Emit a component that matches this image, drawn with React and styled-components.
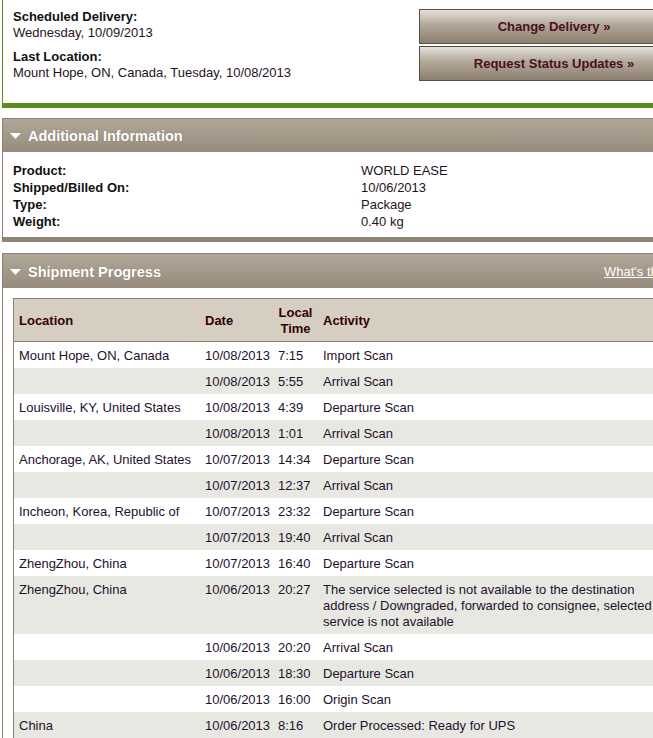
import React from 'react';
import styled, { createGlobalStyle } from 'styled-components';

const GlobalStyle = createGlobalStyle`
html, body {
  margin: 0;
  padding: 0;
  overflow: hidden;
  background: #fff;
}
body {
  font-family: "Liberation Sans", Arial, sans-serif;
  font-size: 13px;
  color: #1f1224;
}
`;

const Page = styled.div`
width: 760px;
margin-left: 2px;
`;

const TopPanel = styled.div`
box-sizing: border-box;
height: 108px;
display: flex;
border-left: 1px solid #5b8e1c;
border-bottom: 5px solid #5b8e1c;
padding: 9px 0 0 10px;
`;

const Summary = styled.div`
width: 406px;
display: flex;
flex-direction: column;
gap: 8px;
`;

const Field = styled.div`
line-height: 16px;
`;

const Label = styled.div`
font-weight: bold;
color: #111;
`;

const Buttons = styled.div`
width: 270px;
display: flex;
flex-direction: column;
gap: 2px;
`;

const ActionButton = styled.button`
box-sizing: border-box;
height: 35px;
width: 100%;
border: 1px solid #5b4e42;
background: linear-gradient(#e3e0d9, #b2a899 45%, #8b7f6f);
color: #4a1022;
font-family: "Liberation Sans", Arial, sans-serif;
font-size: 13px;
font-weight: bold;
padding: 0;
cursor: pointer;
`;

const SectionHeader = styled.div`
box-sizing: border-box;
height: ${p => p.$h}px;
margin-top: ${p => p.$top}px;
display: flex;
align-items: center;
padding: 1px 0 0 7px;
border-top: 1px solid #8a7f70;
border-left: 1px solid #8a7f70;
background: linear-gradient(#b1a798, #978c7c);
color: #fff;
`;

const Caret = styled.svg`
width: 11px;
height: 6px;
margin-right: 7px;
flex: none;
`;

const Title = styled.div`
flex: 0 0 576px;
font-size: 14.5px;
font-weight: bold;
text-shadow: 0 0 1px rgba(80, 70, 60, 0.5);
`;

const HelpLink = styled.a`
color: #fff;
text-decoration: underline;
font-size: 13px;
white-space: nowrap;
`;

const InfoBody = styled.div`
border-left: 1px solid #8a7f70;
border-bottom: 5px solid #8f8575;
padding: 10px 10px 7px;
`;

const InfoRow = styled.div`
display: grid;
grid-template-columns: 348px 1fr;
line-height: 17px;
`;

const InfoLabel = styled.div`
font-weight: bold;
color: #111;
`;

const ProgressBody = styled.div`
border-left: 1px solid #8a7f70;
padding: 10px 0 0 10px;
`;

const Table = styled.table`
width: 650px;
table-layout: fixed;
border-collapse: separate;
border-spacing: 0;
border-left: 1px solid #8a7f70;
`;

const Th = styled.th`
background: #d6cec0;
border-top: 1px solid #8a7f70;
border-bottom: 1px solid #8a7f70;
padding: 6px 5px 4px;
line-height: 16px;
height: 32px;
color: #330008;
font-weight: bold;
text-align: ${p => (p.$center ? 'center' : 'left')};
vertical-align: middle;
`;

const Row = styled.tr`
background: ${p => (p.$alt ? '#e8e8e3' : '#fff')};
`;

const Td = styled.td`
padding: 6px 5px 4px;
line-height: 16px;
vertical-align: top;
color: #24102c;
`;

const rows = [
  ['Mount Hope, ON, Canada', '10/08/2013', '7:15', 'Import Scan'],
  ['', '10/08/2013', '5:55', 'Arrival Scan'],
  ['Louisville, KY, United States', '10/08/2013', '4:39', 'Departure Scan'],
  ['', '10/08/2013', '1:01', 'Arrival Scan'],
  ['Anchorage, AK, United States', '10/07/2013', '14:34', 'Departure Scan'],
  ['', '10/07/2013', '12:37', 'Arrival Scan'],
  ['Incheon, Korea, Republic of', '10/07/2013', '23:32', 'Departure Scan'],
  ['', '10/07/2013', '19:40', 'Arrival Scan'],
  ['ZhengZhou, China', '10/07/2013', '16:40', 'Departure Scan'],
  ['ZhengZhou, China', '10/06/2013', '20:27', 'The service selected is not available to the destination address / Downgraded, forwarded to consignee, selected service is not available'],
  ['', '10/06/2013', '20:20', 'Arrival Scan'],
  ['', '10/06/2013', '18:30', 'Departure Scan'],
  ['', '10/06/2013', '16:00', 'Origin Scan'],
  ['China', '10/06/2013', '8:16', 'Order Processed: Ready for UPS'],
];

const info = [
  ['Product:', 'WORLD EASE'],
  ['Shipped/Billed On:', '10/06/2013'],
  ['Type:', 'Package'],
  ['Weight:', '0.40 kg'],
];

const Arrow = () => (
  <Caret viewBox="0 0 11 6">
    <polygon points="0,0 11,0 5.5,6" fill="#fff" />
  </Caret>
);

export default function App() {
  return (
    <Page>
      <GlobalStyle />
      <TopPanel>
        <Summary>
          <Field>
            <Label>Scheduled Delivery:</Label>
            Wednesday, 10/09/2013
          </Field>
          <Field>
            <Label>Last Location:</Label>
            Mount Hope, ON, Canada, Tuesday, 10/08/2013
          </Field>
        </Summary>
        <Buttons>
          <ActionButton>Change Delivery »</ActionButton>
          <ActionButton>Request Status Updates »</ActionButton>
        </Buttons>
      </TopPanel>

      <SectionHeader $h={34} $top={10}>
        <Arrow />
        <Title>Additional Information</Title>
      </SectionHeader>
      <InfoBody>
        {info.map(([k, v]) => (
          <InfoRow key={k}>
            <InfoLabel>{k}</InfoLabel>
            <div>{v}</div>
          </InfoRow>
        ))}
      </InfoBody>

      <SectionHeader $h={35} $top={11}>
        <Arrow />
        <Title>Shipment Progress</Title>
        <HelpLink href="#">What's this?</HelpLink>
      </SectionHeader>
      <ProgressBody>
        <Table>
          <colgroup>
            <col style={{ width: 186 }} />
            <col style={{ width: 73 }} />
            <col style={{ width: 45 }} />
            <col />
          </colgroup>
          <thead>
            <tr>
              <Th>Location</Th>
              <Th>Date</Th>
              <Th $center>Local<br />Time</Th>
              <Th>Activity</Th>
            </tr>
          </thead>
          <tbody>
            {rows.map((r, i) => (
              <Row key={i} $alt={i % 2 === 1}>
                {r.map((c, j) => (
                  <Td key={j}>{c}</Td>
                ))}
              </Row>
            ))}
          </tbody>
        </Table>
      </ProgressBody>
    </Page>
  );
}
